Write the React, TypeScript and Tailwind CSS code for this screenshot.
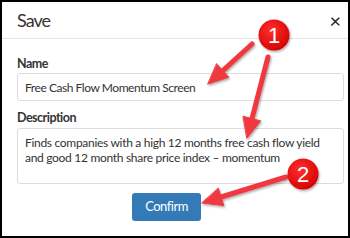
import React from "react";

function Callouts() {
  return (
    <svg
      className="absolute inset-0 pointer-events-none"
      width="350"
      height="238"
      viewBox="0 0 350 238"
    >
      <defs>
        <filter id="sh" x="-20%" y="-20%" width="140%" height="140%">
          <feDropShadow dx="1" dy="1.5" stdDeviation="1.2" floodColor="#000" floodOpacity="0.35" />
        </filter>
        <radialGradient id="dot" cx="40%" cy="35%" r="70%">
          <stop offset="0%" stopColor="#ff3030" />
          <stop offset="100%" stopColor="#d40000" />
        </radialGradient>
      </defs>
      <g filter="url(#sh)" fill="#f0393f" stroke="#f0393f" strokeLinecap="round">
        <line x1="250" y1="42" x2="220.8" y2="68.6" strokeWidth="5" />
        <polygon points="206,82 226.8,75.3 214.8,61.9" strokeWidth="1" strokeLinejoin="round" />
        <line x1="266" y1="55" x2="250" y2="116.6" strokeWidth="5" />
        <polygon points="245,136 258.7,118.9 241.3,114.3" strokeWidth="1" strokeLinejoin="round" />
        <line x1="284" y1="175" x2="219.1" y2="195" strokeWidth="5" />
        <polygon points="200,201 221.8,203.6 216.4,186.4" strokeWidth="1" strokeLinejoin="round" />
      </g>
      <g filter="url(#sh)">
        <circle cx="272" cy="33" r="15.5" fill="url(#dot)" />
        <circle cx="301" cy="172" r="15.5" fill="url(#dot)" />
      </g>
      <text x="272" y="41" textAnchor="middle" fill="#fff" fontSize="22" fontFamily="'Liberation Sans', Arial, sans-serif">1</text>
      <text x="301" y="180" textAnchor="middle" fill="#fff" fontSize="22" fontFamily="'Liberation Sans', Arial, sans-serif">2</text>
    </svg>
  );
}

export default function App() {
  return (
    <div
      className="relative w-[350px] h-[238px] bg-white border-2 border-black text-[#333] overflow-hidden"
      style={{ fontFamily: "Lato, 'Noto Sans', sans-serif" }}
    >
      <div className="h-[37px] flex items-center justify-between pl-[15px] pr-[7px] border-b border-[#e5e5e5]">
        <span className="text-[18px] leading-none tracking-[-1px] text-[#333]">Save</span>
        <span className="text-[20px] leading-none text-[#222]">×</span>
      </div>
      <div className="pl-[15px] pr-[4px] pt-[17px]">
        <label className="block text-[12.5px] leading-[16px] tracking-[-0.5px] font-bold">Name</label>
        <input
          readOnly
          defaultValue="Free Cash Flow Momentum Screen"
          className="mt-px block w-full h-[28px] px-[7px] text-[12px] tracking-[-0.45px] border border-[#ddd] rounded-[3px] outline-none text-[#333]"
        />
        <label className="block mt-[9px] text-[12.5px] leading-[16px] tracking-[-0.5px] font-bold">Description</label>
        <textarea
          readOnly
          rows={3}
          defaultValue="Finds companies with a high 12 months free cash flow yield and good 12 month share price index – momentum"
          className="mt-[2px] block w-full h-[56px] px-[7px] py-[6px] text-[12px] leading-[15px] tracking-[-0.3px] border border-[#ddd] rounded-[3px] outline-none resize-none text-[#333] overflow-hidden"
        />
        <div className="flex pt-[9px] pl-[115px]">
          <button className="w-[69px] h-[28px] bg-[#337ab7] text-white text-[13px] tracking-[-0.5px] rounded-[3px]">
            Confirm
          </button>
        </div>
      </div>
      <Callouts />
    </div>
  );
}
